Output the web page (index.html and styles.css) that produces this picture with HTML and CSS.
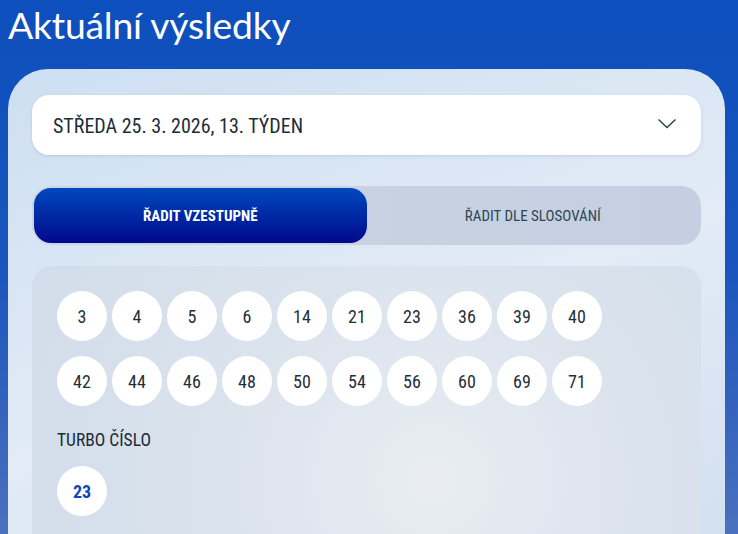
FILE: index.html
```html
<!DOCTYPE html>
<html lang="cs">
<head>
<meta charset="utf-8">
<title>Aktuální výsledky</title>
<link rel="stylesheet" href="styles.css">
</head>
<body>
<div class="page">
  <h1 class="title">Aktuální výsledky</h1>
  <section class="card">
    <div class="select">
      <span class="select-text">STŘEDA 25. 3. 2026, 13. TÝDEN</span>
      <svg class="chevron" width="20" height="12" viewBox="0 0 20 12"><path d="M1.5 1.5 L10 9.5 L18.5 1.5" fill="none" stroke="#23404c" stroke-width="1.4"/></svg>
    </div>
    <div class="toggle">
      <button class="tab tab-active">ŘADIT VZESTUPNĚ</button>
      <button class="tab">ŘADIT DLE SLOSOVÁNÍ</button>
    </div>
    <div class="panel">
      <div class="balls">
        <span class="ball">3</span><span class="ball">4</span><span class="ball">5</span><span class="ball">6</span><span class="ball">14</span><span class="ball">21</span><span class="ball">23</span><span class="ball">36</span><span class="ball">39</span><span class="ball">40</span>
        <span class="ball">42</span><span class="ball">44</span><span class="ball">46</span><span class="ball">48</span><span class="ball">50</span><span class="ball">54</span><span class="ball">56</span><span class="ball">60</span><span class="ball">69</span><span class="ball">71</span>
      </div>
      <div class="turbo-label">TURBO ČÍSLO</div>
      <div class="balls">
        <span class="ball ball-turbo">23</span>
      </div>
    </div>
  </section>
</div>
</body>
</html>
```
FILE: styles.css
```css
html, body {
  margin: 0;
  padding: 0;
}
body {
  width: 738px;
  height: 534px;
  overflow: hidden;
  background: linear-gradient(180deg, #0d4fbd 0%, #1a55bd 50%, #4b70be 100%);
  font-family: Roboto, "Liberation Sans", sans-serif;
}
.page {
  padding: 0 13px 0 8px;
}
.title {
  margin: 0;
  padding-top: 5px;
  height: 69px;
  box-sizing: border-box;
  font-family: Lato, "Open Sans", sans-serif;
  font-weight: 400;
  font-size: 37.3px;
  line-height: 40px;
  color: #ffffff;
  letter-spacing: -0.2px;
}
.card {
  border-radius: 40px 40px 0 0;
  background: linear-gradient(160deg, #cddff2 0%, #e2ebf6 55%, #d2e0f0 100%);
  padding: 26px 24px 0 24px;
  height: 465px;
  box-sizing: border-box;
  overflow: hidden;
}
.select {
  height: 60px;
  background: #ffffff;
  border-radius: 17px;
  display: flex;
  align-items: center;
  justify-content: space-between;
  padding: 0 24px 0 21px;
  box-shadow: 0 1px 3px rgba(40, 70, 110, 0.15);
}
.select-text {
  font-size: 20px;
  font-stretch: 80%;
  color: #1d2d38;
  padding-top: 1px;
}
.chevron {
  display: block;
  margin-top: -2px;
}
.toggle {
  margin-top: 31px;
  height: 59px;
  border-radius: 20px;
  background: linear-gradient(90deg, #cad4e3 0%, #c4cfe1 100%);
  display: flex;
  padding: 2px;
  box-sizing: border-box;
}
.tab {
  flex: 1;
  border: 0;
  border-radius: 17px;
  background: transparent;
  font-family: Roboto, "Liberation Sans", sans-serif;
  font-size: 15px;
  font-stretch: 80%;
  color: #2f4652;
  padding: 0;
  cursor: pointer;
}
.tab-active {
  background: linear-gradient(180deg, #0049bd 0%, #00098c 100%);
  color: #ffffff;
  font-weight: 700;
}
.panel {
  margin-top: 21px;
  border-radius: 20px 20px 0 0;
  background: radial-gradient(circle at 60% 80%, #e9edf3 0%, #dbe3ed 45%, #d1ddea 100%);
  padding: 25px 25px 0 25px;
  height: 268px;
  box-sizing: border-box;
}
.balls {
  display: flex;
  flex-wrap: wrap;
  column-gap: 5px;
  row-gap: 15px;
  width: 545px;
}
.ball {
  width: 50px;
  height: 50px;
  border-radius: 50%;
  background: #ffffff;
  display: flex;
  align-items: center;
  justify-content: center;
  font-size: 18px;
  font-stretch: 80%;
  color: #1f2f3a;
}
.ball-turbo {
  color: #0b47bb;
  font-weight: 700;
}
.turbo-label {
  margin-top: 24px;
  margin-bottom: 16px;
  font-size: 17.5px;
  font-stretch: 80%;
  line-height: 20px;
  color: #1d2b36;
}
```
